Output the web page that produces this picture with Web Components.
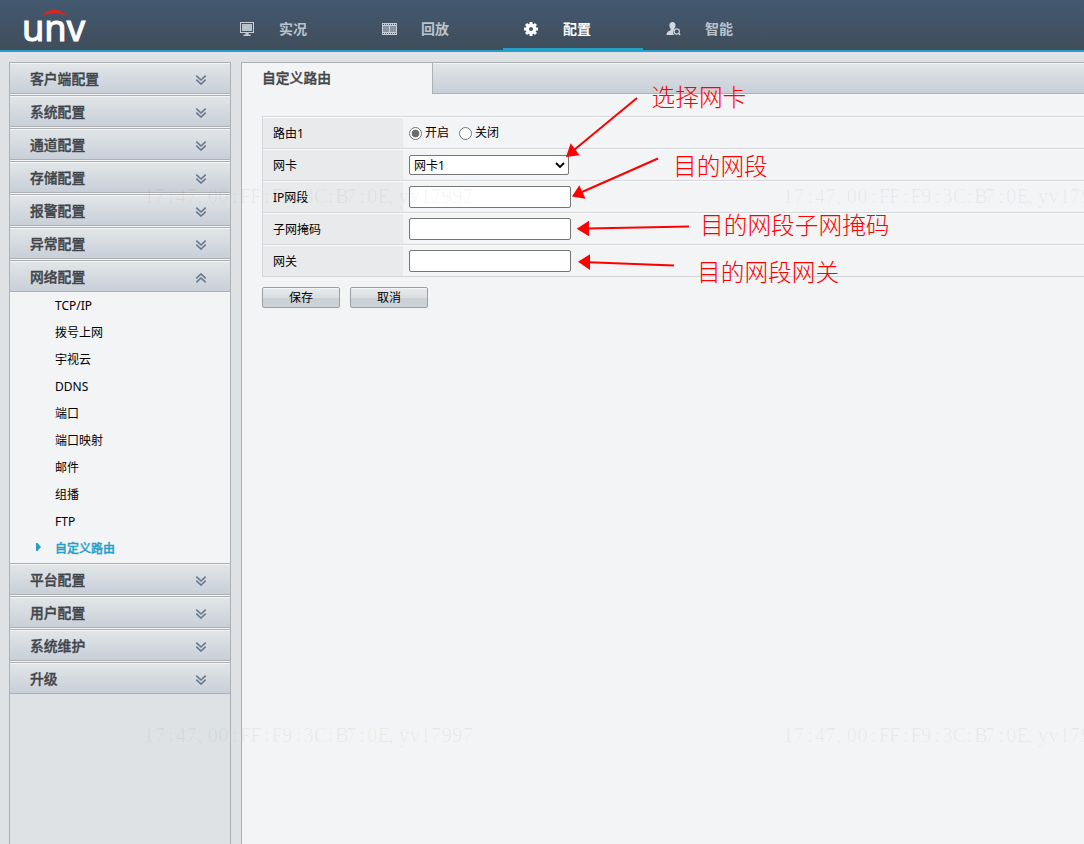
<!DOCTYPE html>
<html lang="zh-CN">
<head>
    <meta charset="utf-8">
    <title>自定义路由</title>
    <style>
        html,
        body {
            height: 100%;
            margin: 0;
            overflow: hidden;
        }

        body {
            --line: #aeb0b4;
            --accent: #259fc7;
            --bar: linear-gradient(#e2e6e8, #c8cfd8);
            background: #dee2e5;
            color: #000;
            font: 12px/16px "Noto Sans", "Noto Sans CJK SC", sans-serif;
        }
    </style>
</head>
<body>
    <config-page></config-page>

    <script>
        class AppLogo extends HTMLElement {
            constructor() {
                super();
                this.attachShadow({ mode: 'open' });
                this.shadowRoot.innerHTML = `
                    <style>
                        :host {
                            display: block;
                            height: 52px;
                            width: 219px;
                        }

                        svg {
                            display: block;
                            overflow: visible;
                        }

                        text {
                            fill: #fff;
                            font: 37px "Noto Sans", sans-serif;
                            stroke: #fff;
                            stroke-width: 1.1;
                        }
                    </style>
                    <svg width="110" height="52">
                        <path d="M41.500 16C48 7.800 60 7.800 67 16C59 12.300 50 12.300 41.500 16Z" fill="#e32121"/>
                        <text x="22" y="41" textLength="63" lengthAdjust="spacingAndGlyphs">unv</text>
                    </svg>
                `;
            }
        }

        const navIcons = {
            live: `
                <path d="M0 1h14v11H0zM1 2v9h12V2z" fill="#c6cdd5" fill-rule="evenodd"/>
                <path d="M2 3h10v7H2z" fill="#b9c1ca"/>
                <path d="M5.500 12h3v1.500h2V15h-7v-1.500h2z" fill="#c6cdd5"/>`,
            playback: `
                <path d="M0 2h15v12H0z" fill="#c6cdd5"/>
                <path d="M1 5h6v6H1zM8 5h6v6H8z" fill="#8794a1"/>
                <path d="M1 3.500h14M1 12.500h14" stroke="#4b5b6b" stroke-dasharray="1 1"/>`,
            setup: `
                <g fill="#fff" transform="translate(7 8)">
                    <path d="M-1.500-7h3v14h-3zM-7-1.500h14v3H-7z"/>
                    <path d="M-1.500-7h3v14h-3zM-7-1.500h14v3H-7z" transform="rotate(45)"/>
                    <circle r="5.400"/>
                    <circle r="2" fill="#465668"/>
                </g>`,
            smart: `
                <path d="M6.500 1C8.500 1 9.700 2.500 9.500 4.500C9.400 6 8.700 6.800 8.300 7.500V9C7 10 6.800 12.500 8 14H.5C.5 11.500 2 10.300 4.600 9.300V7.500C3.900 6.700 3.400 5.800 3.400 4.500C3.300 2.500 4.500 1 6.500 1Z" fill="#d2d8df"/>
                <circle cx="10.800" cy="10.500" r="2.600" fill="none" stroke="#c6cdd5" stroke-width="1.200"/>
                <path d="M12.600 12.300l1.500 1.700" stroke="#c6cdd5" stroke-width="1.300"/>`
        };

        class NavItem extends HTMLElement {
            constructor() {
                super();
                this.attachShadow({ mode: 'open' });
                this.shadowRoot.innerHTML = `
                    <style>
                        :host {
                            align-items: center;
                            border-bottom: 4px solid transparent;
                            box-sizing: border-box;
                            color: #bac3cc;
                            display: flex;
                            font-size: 14px;
                            font-weight: bold;
                            gap: 24px;
                            height: 52px;
                            padding: 10px 0 0 21px;
                            width: 140px;
                        }

                        :host([active]) {
                            border-color: var(--accent);
                            color: #fff;
                        }
                    </style>
                    <svg width="15" height="16">${navIcons[this.getAttribute('icon')]}</svg>
                    <slot></slot>
                `;
            }
        }

        class TopBar extends HTMLElement {
            constructor() {
                super();
                this.attachShadow({ mode: 'open' });
                this.shadowRoot.innerHTML = `
                    <style>
                        :host {
                            background: linear-gradient(var(--accent), var(--accent)) 0 50px / 100% 2px no-repeat,
                                linear-gradient(#43596f, #404d5b 50px);
                            display: flex;
                            height: 52px;
                        }

                        nav {
                            display: flex;
                            gap: 2px;
                        }
                    </style>
                    <app-logo></app-logo>
                    <nav><slot></slot></nav>
                `;
            }
        }

        class MenuGroup extends HTMLElement {
            constructor() {
                super();
                this.attachShadow({ mode: 'open' });
                this.shadowRoot.innerHTML = `
                    <style>
                        :host {
                            background: #f3f4f6;
                            display: block;
                            padding-bottom: 1px;
                        }

                        :host(:last-child) {
                            padding: 0;
                        }

                        header {
                            align-items: center;
                            background: var(--bar);
                            border: solid var(--line);
                            border-width: 1px 0;
                            box-shadow: inset 0 1px #f3f4f6;
                            box-sizing: border-box;
                            color: #414549;
                            display: flex;
                            font-size: 13.8px;
                            font-weight: 500;
                            height: 32px;
                            justify-content: space-between;
                            padding: 2px 24px 0 20px;
                            -webkit-text-stroke: 0.35px;
                        }

                        svg {
                            fill: none;
                            margin-top: 2px;
                            stroke: #66788a;
                            stroke-width: 1.6;
                        }

                        :host([opened]) svg {
                            transform: scaleY(-1);
                        }
                    </style>
                    <header>
                        <span>${this.getAttribute('label')}</span>
                        <svg width="10" height="10"><path d="M.3 .7l4.700 4.300l4.700-4.300M.3 4.700l4.700 4.300l4.700-4.300"/></svg>
                    </header>
                    <slot></slot>
                `;
            }
        }

        class MenuLink extends HTMLElement {
            constructor() {
                super();
                this.attachShadow({ mode: 'open' });
                this.shadowRoot.innerHTML = `
                    <style>
                        :host {
                            align-items: center;
                            display: flex;
                            height: 27px;
                        }

                        svg {
                            fill: none;
                            margin: 0 14px 3px 26px;
                        }

                        :host([active]) {
                            color: var(--accent);
                            font-weight: 500;
                            -webkit-text-stroke: 0.35px;
                        }

                        :host([active]) svg {
                            fill: var(--accent);
                        }
                    </style>
                    <svg width="5" height="8"><path d="M0 0h1.500L5 4L1.500 8H0z"/></svg>
                    <slot></slot>
                `;
            }
        }

        class SideMenu extends HTMLElement {
            constructor() {
                super();
                this.attachShadow({ mode: 'open' });
                this.shadowRoot.innerHTML = `
                    <style>
                        :host {
                            border: solid var(--line);
                            border-width: 0 1px;
                            box-sizing: border-box;
                            display: block;
                            width: 222px;
                        }
                    </style>
                    <slot></slot>
                `;
            }
        }

        class TabPanel extends HTMLElement {
            constructor() {
                super();
                this.attachShadow({ mode: 'open' });
                this.shadowRoot.innerHTML = `
                    <style>
                        :host {
                            background: #f3f4f6;
                            border: solid var(--line);
                            border-width: 1px 0 0 1px;
                            display: block;
                        }

                        header {
                            display: flex;
                            height: 31px;
                        }

                        .tab {
                            border-right: 1px solid var(--line);
                            box-sizing: border-box;
                            color: #414549;
                            font-size: 13.8px;
                            font-weight: 500;
                            padding: 7px 0 0 20px;
                            width: 191px;
                            -webkit-text-stroke: 0.35px;
                        }

                        .rest {
                            background: var(--bar);
                            border-bottom: 1px solid var(--line);
                            box-shadow: inset 0 1px #f3f4f6;
                            box-sizing: border-box;
                            flex: 1;
                        }

                        section {
                            padding: 22px 0 0 20px;
                        }
                    </style>
                    <header>
                        <div class="tab">${this.getAttribute('label')}</div>
                        <div class="rest"></div>
                    </header>
                    <section><slot></slot></section>
                `;
            }
        }

        class FormRow extends HTMLElement {
            constructor() {
                super();
                this.attachShadow({ mode: 'open' });
                this.shadowRoot.innerHTML = `
                    <style>
                        :host {
                            border: solid #d4d6dc;
                            border-width: 1px 0 0 1px;
                            box-shadow: inset 0 1px #fff;
                            box-sizing: border-box;
                            display: flex;
                            height: 32px;
                        }

                        :host([last]) {
                            border-bottom-width: 1px;
                            height: 33px;
                        }

                        .label,
                        .field {
                            align-items: center;
                            display: flex;
                        }

                        .label {
                            background: #e9eaec;
                            box-sizing: border-box;
                            margin-top: 1px;
                            padding: 1px 0 0 10px;
                            width: 140px;
                        }

                        .field {
                            padding: 1px 0 0 6px;
                        }
                    </style>
                    <div class="label">${this.getAttribute('label')}</div>
                    <div class="field"><slot></slot></div>
                `;
            }
        }

        class RadioOption extends HTMLElement {
            constructor() {
                super();
                this.attachShadow({ mode: 'open' });
                this.shadowRoot.innerHTML = `
                    <style>
                        :host {
                            align-items: center;
                            display: flex;
                            gap: 3px;
                            margin-right: 10px;
                        }

                        i {
                            background: #fff;
                            border: 1px solid #767676;
                            border-radius: 50%;
                            box-sizing: border-box;
                            height: 13px;
                            margin-top: 1px;
                            width: 13px;
                        }

                        :host([checked]) i {
                            background: radial-gradient(circle, #6c6c6c 3.5px, #fff 4.2px);
                        }
                    </style>
                    <i></i><slot></slot>
                `;
            }
        }

        class TextBox extends HTMLElement {
            constructor() {
                super();
                this.attachShadow({ mode: 'open' });
                this.shadowRoot.innerHTML = `
                    <style>
                        :host {
                            background: #fff;
                            border: 1px solid #767676;
                            border-radius: 2px;
                            box-sizing: border-box;
                            display: block;
                            height: 22px;
                            width: 162px;
                        }
                    </style>
                `;
            }
        }

        class SelectBox extends HTMLElement {
            constructor() {
                super();
                this.attachShadow({ mode: 'open' });
                this.shadowRoot.innerHTML = `
                    <style>
                        :host {
                            align-items: center;
                            background: #fff;
                            border: 1px solid #767676;
                            border-radius: 2px;
                            box-sizing: border-box;
                            display: flex;
                            height: 20px;
                            justify-content: space-between;
                            padding: 1px 3px 0 4px;
                            width: 160px;
                        }
                    </style>
                    <slot></slot>
                    <svg width="10" height="7"><path d="M1 1l4 4l4-4" fill="none" stroke="#000" stroke-width="1.900"/></svg>
                `;
            }
        }

        class PushButton extends HTMLElement {
            constructor() {
                super();
                this.attachShadow({ mode: 'open' });
                this.shadowRoot.innerHTML = `
                    <style>
                        :host {
                            background: linear-gradient(#e8ebed, #dadee1 50%, #cbd0d5 51%, #cdd2d6);
                            border: 1px solid #9b9fa4;
                            border-radius: 2px;
                            box-shadow: inset 0 1px #f3f4f6;
                            box-sizing: border-box;
                            display: block;
                            height: 21px;
                            line-height: 20px;
                            text-align: center;
                            width: 78px;
                        }
                    </style>
                    <slot></slot>
                `;
            }
        }

        // red arrows and captions laid over the form
        class CalloutLayer extends HTMLElement {
            constructor() {
                super();
                this.attachShadow({ mode: 'open' });
                this.shadowRoot.innerHTML = `
                    <style>
                        :host {
                            inset: 0;
                            pointer-events: none;
                            position: absolute;
                        }

                        text {
                            font: 300 23.7px "Noto Sans CJK SC", sans-serif;
                        }
                    </style>
                    <svg width="1084" height="844" fill="#f00">
                        <path d="M637 98L574 150M658 158.500L582 192M689 226.500L588 228.500M674 265.500L589 262.300" stroke="#f00" stroke-width="2"/>
                        <path d="M566 157L570.700 143.300L579.500 155.200ZM572 196.500L579.300 185.300L585.500 198.700ZM576.700 228.700L589 220.700V236.300ZM578 261.800L590 254.300V270Z"/>
                        <text x="651.500" y="106">选择网卡</text>
                        <text x="673" y="175">目的网段</text>
                        <text x="700" y="234">目的网段子网掩码</text>
                        <text x="697" y="281">目的网段网关</text>
                    </svg>
                `;
            }
        }

        class WaterMark extends HTMLElement {
            constructor() {
                super();
                this.attachShadow({ mode: 'open' });
                const mark = '17:47,00:FF:F9:3C:B7:0E,yv17997';
                const spots = [[144, 203], [783, 203], [144, 742], [783, 742]];
                // one fixed cell per character
                const cells = x => [...mark].map((c, i) => x + i * 10.63 + (c === ':' ? 3 : 0)).join(' ');
                this.shadowRoot.innerHTML = `
                    <style>
                        :host {
                            inset: 0;
                            overflow: hidden;
                            pointer-events: none;
                            position: absolute;
                        }

                        text {
                            fill: rgba(60, 60, 60, 0.06);
                            font: 20px "Liberation Serif", serif;
                        }
                    </style>
                    <svg width="1084" height="844">
                        ${spots.map(([x, y]) => `<text x="${cells(x)}" y="${y}">${mark}</text>`).join('')}
                    </svg>
                `;
            }
        }

        class ConfigPage extends HTMLElement {
            constructor() {
                super();
                this.attachShadow({ mode: 'open' });
                this.shadowRoot.innerHTML = `
                    <style>
                        :host {
                            display: flex;
                            flex-direction: column;
                            height: 100%;
                            overflow: hidden;
                            position: relative;
                        }

                        main {
                            display: flex;
                            flex: 1;
                            gap: 10px;
                            padding: 10px 0 0 9px;
                        }

                        tab-panel {
                            flex: 1;
                        }

                        .buttons {
                            display: flex;
                            gap: 10px;
                            margin-top: 10px;
                        }
                    </style>
                    <top-bar>
                        <nav-item icon="live">实况</nav-item>
                        <nav-item icon="playback">回放</nav-item>
                        <nav-item icon="setup" active>配置</nav-item>
                        <nav-item icon="smart">智能</nav-item>
                    </top-bar>
                    <main>
                        <side-menu>
                            <menu-group label="客户端配置"></menu-group>
                            <menu-group label="系统配置"></menu-group>
                            <menu-group label="通道配置"></menu-group>
                            <menu-group label="存储配置"></menu-group>
                            <menu-group label="报警配置"></menu-group>
                            <menu-group label="异常配置"></menu-group>
                            <menu-group label="网络配置" opened>
                                <menu-link>TCP/IP</menu-link>
                                <menu-link>拨号上网</menu-link>
                                <menu-link>宇视云</menu-link>
                                <menu-link>DDNS</menu-link>
                                <menu-link>端口</menu-link>
                                <menu-link>端口映射</menu-link>
                                <menu-link>邮件</menu-link>
                                <menu-link>组播</menu-link>
                                <menu-link>FTP</menu-link>
                                <menu-link active>自定义路由</menu-link>
                            </menu-group>
                            <menu-group label="平台配置"></menu-group>
                            <menu-group label="用户配置"></menu-group>
                            <menu-group label="系统维护"></menu-group>
                            <menu-group label="升级"></menu-group>
                        </side-menu>
                        <tab-panel label="自定义路由">
                            <form-row label="路由1">
                                <radio-option checked>开启</radio-option>
                                <radio-option>关闭</radio-option>
                            </form-row>
                            <form-row label="网卡"><select-box>网卡1</select-box></form-row>
                            <form-row label="IP网段"><text-box></text-box></form-row>
                            <form-row label="子网掩码"><text-box></text-box></form-row>
                            <form-row label="网关" last><text-box></text-box></form-row>
                            <div class="buttons">
                                <push-button>保存</push-button>
                                <push-button>取消</push-button>
                            </div>
                        </tab-panel>
                    </main>
                    <water-mark></water-mark>
                    <callout-layer></callout-layer>
                `;
            }
        }

        customElements.define('app-logo', AppLogo);
        customElements.define('nav-item', NavItem);
        customElements.define('top-bar', TopBar);
        customElements.define('menu-group', MenuGroup);
        customElements.define('menu-link', MenuLink);
        customElements.define('side-menu', SideMenu);
        customElements.define('tab-panel', TabPanel);
        customElements.define('form-row', FormRow);
        customElements.define('radio-option', RadioOption);
        customElements.define('text-box', TextBox);
        customElements.define('select-box', SelectBox);
        customElements.define('push-button', PushButton);
        customElements.define('callout-layer', CalloutLayer);
        customElements.define('water-mark', WaterMark);
        customElements.define('config-page', ConfigPage);
    </script>
</body>
</html>
